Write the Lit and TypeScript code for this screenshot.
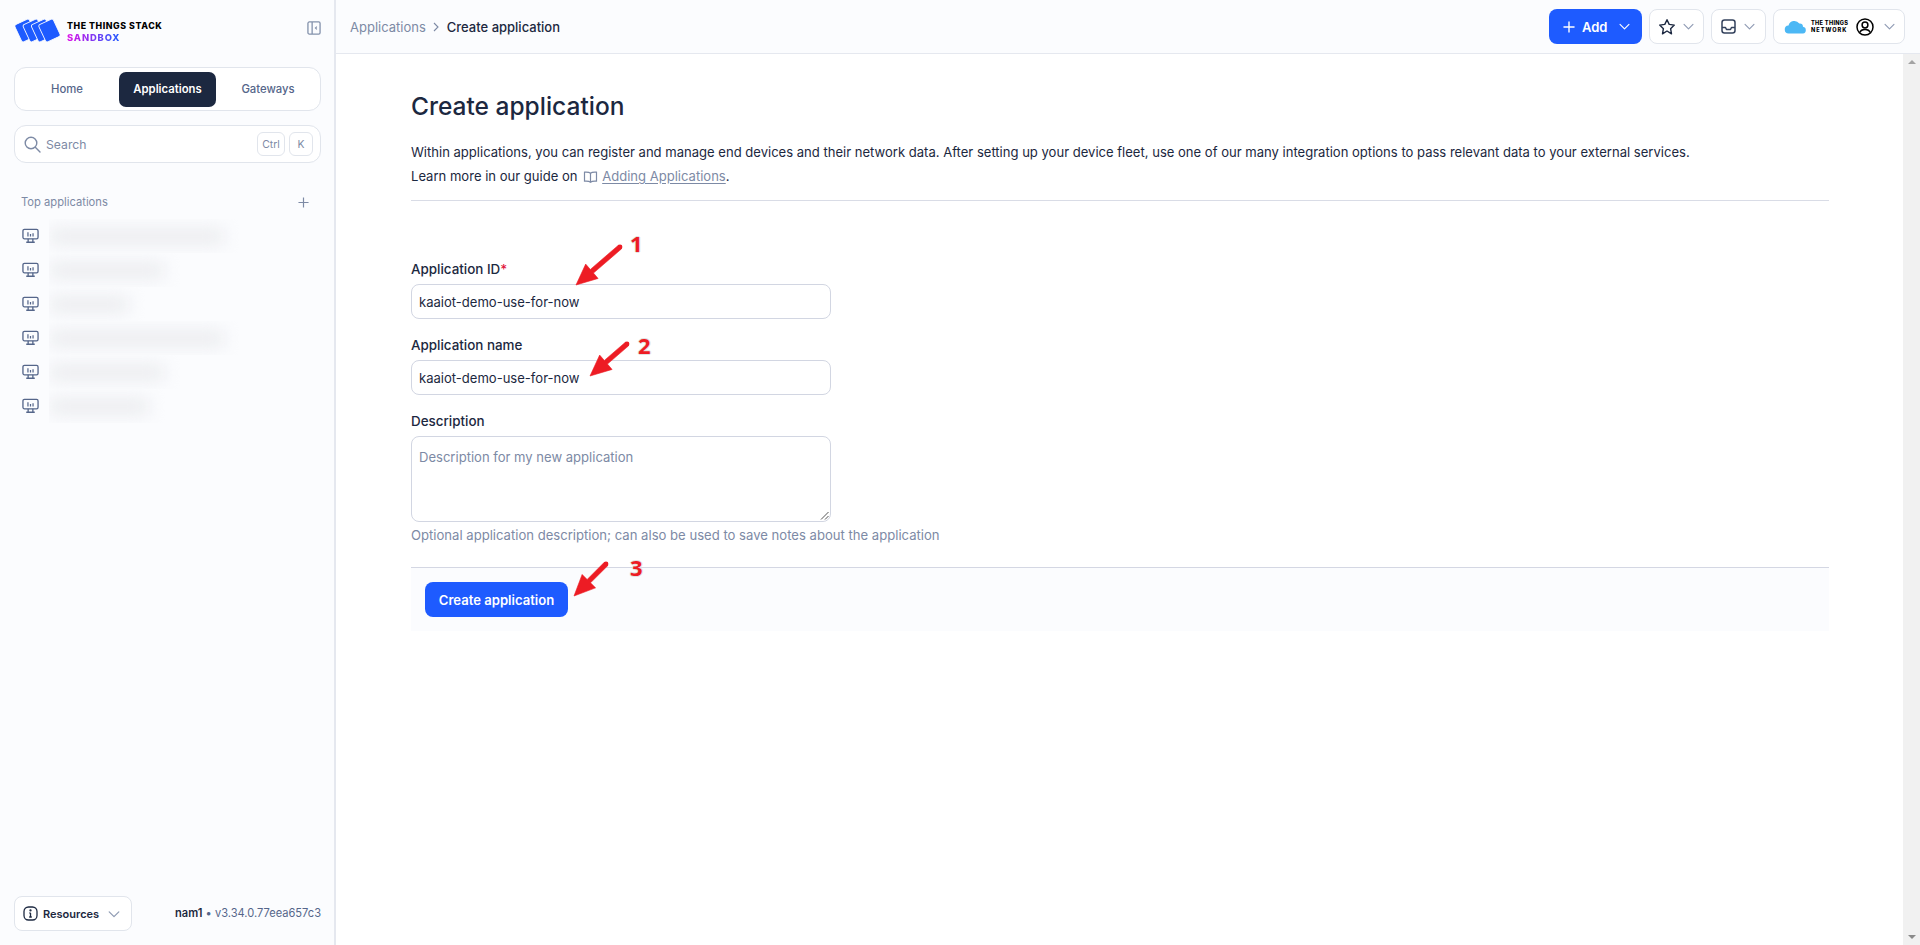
import { LitElement, html, css, svg } from "lit";
import { customElement } from "lit/decorators.js";

const chevron = html`<svg class="chev" viewBox="0 0 16 16" fill="none" stroke="currentColor" stroke-width="1.4" stroke-linecap="round" stroke-linejoin="round"><path d="M2.5 5.5 8 11l5.500-5.500"/></svg>`;

const monitor = html`<svg class="mon" viewBox="0 0 18 16" fill="none" stroke="#55668a" stroke-width="1.4"><rect x="1" y="1" width="16" height="10" rx="1.6"/><path d="M6.500 11v3.400M11.500 11v3.400M4.500 14.600h9"/><path d="M6.300 8.500V4M9 8.500V6M11.700 8.500V5" stroke-width="1.300"/></svg>`;

const arrow = (x1: number, y1: number, x2: number, y2: number) => {
  const a = Math.atan2(y2 - y1, x2 - x1);
  const L = 21, W = 9.5, T = 2.4;
  const bx = x2 - L * Math.cos(a), by = y2 - L * Math.sin(a);
  const nx = -Math.sin(a), ny = Math.cos(a);
  const p = `${x2},${y2} ${bx + nx * W},${by + ny * W} ${bx + nx * T},${by + ny * T} ${x1 + nx * T},${y1 + ny * T} ${x1 - nx * T},${y1 - ny * T} ${bx - nx * T},${by - ny * T} ${bx - nx * W},${by - ny * W}`;
  return svg`<polygon points=${p} fill="#ed1c24" stroke="#ed1c24" stroke-width="0.6" stroke-linejoin="round"/><circle cx=${x1} cy=${y1} r=${T} fill="#ed1c24"/>`;
};

@customElement("app-root")
export class AppRoot extends LitElement {
  static styles = css`
    :host { display: block; width: 1920px; height: 945px; overflow: hidden; font-family: Inter, "Noto Sans", sans-serif; color: #1c2840; background: #fff; position: relative; }
    * { box-sizing: border-box; }
    .shell { display: flex; height: 945px; }

    .side { width: 336px; flex: none; background: #fbfcfe; border-right: 2px solid #e5e8ef; display: flex; flex-direction: column; padding: 0 13px 0 14px; }
    .brand { height: 67px; display: flex; align-items: flex-start; padding-top: 18px; }
    .logo { width: 47px; height: 25px; flex: none; }
    .brandtext { margin-left: 6px; margin-top: 2px; font-weight: 800; font-size: 8.8px; letter-spacing: 0.56px; line-height: 12px; color: #000; white-space: nowrap; }
    .sandbox { display: block; font-size: 9.4px; background: linear-gradient(90deg, #e012e8, #1e5bff); -webkit-background-clip: text; background-clip: text; color: transparent; letter-spacing: 0.85px; width: max-content; }
    .collapse { width: 14px; height: 14px; margin-left: auto; margin-top: 3px; color: #8492ac; }

    .tabs { height: 44px; border: 1px solid #e1e5ec; border-radius: 12px; background: #fff; display: flex; align-items: center; padding: 0 4px; font-size: 11.3px; font-weight: 500; color: #55668a; }
    .tab { flex: 1; height: 35px; display: flex; align-items: center; justify-content: center; border-radius: 7px; }
    .tab.on { flex: none; width: 97px; margin: 0 4px 0 0; background: #1c2840; color: #fff; font-weight: 600; }
    .tab.first { flex: none; width: 100px; padding-right: 4px; }

    .search { margin-top: 14px; height: 38px; border: 1px solid #e1e5ec; border-radius: 12px; background: #fff; display: flex; align-items: center; padding: 0 7px 0 9px; font-size: 12.2px; color: #7d8aa5; }
    .search svg { width: 17px; height: 17px; margin-right: 5px; }
    .kbd { height: 24px; border: 1px solid #e1e5ec; border-radius: 6px; display: flex; align-items: center; justify-content: center; font-size: 10.4px; color: #7d8aa5; margin-left: 4px; width: 24px; }
    .kbd.first { margin-left: auto; width: 28px; }

    .tophead { margin-top: 31px; padding: 0 12px 0 7px; height: 16px; display: flex; justify-content: space-between; align-items: center; font-size: 11.2px; color: #7d8aa5; }
    .tophead svg { width: 11px; height: 11px; }
    .list { margin-top: 9px; }
    .row { height: 34px; display: flex; align-items: center; padding-left: 8px; }
    .mon { width: 17px; height: 16px; flex: none; }
    .blurcell { margin-left: 10px; height: 34px; width: 190px; overflow: hidden; display: flex; align-items: center; }
    .blurbar { height: 11px; background: #e4e5e9; filter: blur(9px); margin-left: 0; }

    .foot { margin-top: auto; height: 49px; display: flex; align-items: flex-start; justify-content: space-between; }
    .res { width: 118px; height: 35px; border: 1px solid #e1e5ec; border-radius: 8px; background: #fff; display: flex; align-items: center; padding: 0 10px 0 8px; font-size: 11px; font-weight: 600; color: #1c2840; }
    .res svg.i { width: 15px; height: 15px; margin-right: 5px; }
    .res .chev { width: 14px; height: 14px; margin-left: auto; color: #8f9bb3; }
    .ver { font-size: 11.1px; color: #55668a; margin-top: 10px; }
    .ver b { font-weight: 600; color: #1c2840; }

    .right { flex: 1; min-width: 0; display: flex; flex-direction: column; }
    .top { height: 54px; flex: none; background: #fbfcfe; border-bottom: 1px solid #e5e8ef; display: flex; align-items: flex-start; padding: 9px 15px 0 14px; }
    .crumb { height: 35px; display: flex; align-items: center; font-size: 13px; color: #7d8aa5; }
    .crumb svg { width: 10px; height: 10px; margin: 0 5.5px; color: #7d8aa5; }
    .crumb b { font-weight: 500; color: #1c2840; }
    .actions { margin-left: auto; display: flex; gap: 7px; }
    .add { width: 93px; height: 35px; background: #1e5bff; color: #fff; border-radius: 8px; display: flex; align-items: center; padding-left: 14px; font-size: 13px; font-weight: 600; }
    .add .plus { width: 12px; height: 12px; margin-right: 7px; }
    .add .chev { width: 13px; height: 13px; margin-left: 10px; }
    .ib { height: 35px; border: 1px solid #e1e5ec; border-radius: 8px; background: #fff; display: flex; align-items: center; }
    .ib .chev { width: 13px; height: 13px; color: #8f9bb3; }
    .star { width: 55px; padding-left: 8px; gap: 6px; }
    .star svg:first-child { width: 18px; height: 18px; }
    .inbox { width: 55px; padding-left: 9px; gap: 7px; }
    .inbox svg:first-child { width: 15px; height: 15px; }
    .prof { width: 132px; padding-left: 10px; }
    .cloud { width: 23px; height: 14px; flex: none; }
    .ttn { font-size: 5.6px; font-weight: 800; letter-spacing: 0.3px; line-height: 7px; color: #000; margin-left: 4px; white-space: nowrap; }
    .ttn span { display: block; letter-spacing: 1px; }
    .prof .user { width: 18px; height: 18px; margin-left: 8px; flex: none; }
    .prof .chev { margin-left: 9px; }

    .body { flex: 1; display: flex; min-height: 0; }
    .main { flex: 1; padding: 34px 74px 0 75px; }
    h1 { margin: 0; font-size: 24.5px; font-weight: 500; line-height: 36px; color: #1c2840; }
    .desc { margin-top: 16px; font-size: 13.05px; line-height: 24px; color: #1c2840; }
    .desc a { color: #7d8aa5; text-decoration: underline; text-underline-offset: 2px; }
    .desc svg { width: 15px; height: 14px; vertical-align: -3px; margin: 0 4px 0 2px; color: #7d8aa5; }
    .hr { height: 1px; background: #d9dce6; margin-top: 12px; }
    form { display: block; margin-top: 60px; width: 420px; }
    label { display: block; font-size: 13.4px; font-weight: 500; line-height: 16px; color: #1c2840; }
    label i { color: #e0123a; font-style: normal; }
    .input { margin-top: 7px; height: 35px; border: 1px solid #d2d6e2; border-radius: 8px; padding: 0 7px; display: flex; align-items: center; font-size: 13.05px; color: #1c2840; }
    label.next { margin-top: 18px; }
    .ta { margin-top: 7px; height: 86px; border: 1px solid #d2d6e2; border-radius: 8px; padding: 12px 7px; font-size: 13.05px; line-height: 16px; color: #7d8aa5; position: relative; }
    .ta svg { position: absolute; right: 1px; bottom: 1px; width: 9px; height: 9px; }
    .help { font-size: 13.1px; line-height: 16px; color: #7d8aa5; margin-top: 5px; white-space: nowrap; }
    .submit { margin-top: 24px; height: 64px; background: #fbfcfe; border-top: 1px solid #d4d7e3; padding: 14px 14px; }
    .btn { width: 143px; height: 35px; background: #1e5bff; border-radius: 8px; color: #fff; font-size: 13.1px; font-weight: 600; display: flex; align-items: center; justify-content: center; }

    .bar { width: 17px; flex: none; background: #f1f1f1; display: flex; flex-direction: column; justify-content: space-between; align-items: center; padding: 6px 0; }
    .bar i { width: 0; height: 0; border-left: 4px solid transparent; border-right: 4px solid transparent; display: block; }
    .bar .u { border-bottom: 4px solid #a3a3a3; }
    .bar .d { border-top: 4px solid #8a8a8a; }

    .notes { position: absolute; left: 0; top: 0; width: 1920px; height: 945px; pointer-events: none; }
    .n { position: absolute; font-family: "Open Sans", sans-serif; font-weight: 700; font-size: 22px; line-height: 24px; color: #ed1c24; text-shadow: 1px 0 0 #e2e2e2, -1px 0 0 #e2e2e2, 0 1px 0 #e2e2e2, 0 -1px 0 #e2e2e2; }
  `;

  render() {
    const widths = [175, 115, 80, 175, 115, 100];
    return html`
      <div class="shell">
        <aside class="side">
          <div class="brand">
            <svg class="logo" viewBox="0 0 47 25">
              ${[11.5, 19.8, 28.1, 35.5].map(
                (x) => svg`<rect x=${x - 8} y="3" width="16" height="19" rx="2" fill="#1e5bff" stroke="#fbfcfe" stroke-width="0.9" transform="rotate(-25 ${x} 12.5)"/>`
              )}
            </svg>
            <div class="brandtext">THE THINGS STACK<span class="sandbox">SANDBOX</span></div>
            <svg class="collapse" viewBox="0 0 15 15" fill="none" stroke="currentColor" stroke-width="1.4"><rect x="1" y="1" width="13" height="13" rx="1.5"/><path d="M5.5 1v13"/><path d="M10.6 6 9 7.5l1.6 1.5" stroke-width="1.2"/></svg>
          </div>
          <div class="tabs">
            <div class="tab first">Home</div>
            <div class="tab on">Applications</div>
            <div class="tab">Gateways</div>
          </div>
          <div class="search">
            <svg viewBox="0 0 17 17" fill="none" stroke="currentColor" stroke-width="1.4" stroke-linecap="round"><circle cx="7" cy="7" r="5.8"/><path d="M11.3 11.3 16 16"/></svg>
            <span>Search</span>
            <span class="kbd first">Ctrl</span><span class="kbd">K</span>
          </div>
          <div class="tophead">
            <span>Top applications</span>
            <svg viewBox="0 0 12 12" stroke="currentColor" stroke-width="1.3" fill="none"><path d="M6 .5v11M.5 6h11"/></svg>
          </div>
          <div class="list">
            ${widths.map(
              (w) => html`<div class="row">${monitor}<div class="blurcell"><div class="blurbar" style="width:${w}px"></div></div></div>`
            )}
          </div>
          <div class="foot">
            <div class="res">
              <svg class="i" viewBox="0 0 15 15" fill="none" stroke="#1c2840" stroke-width="1.3"><rect x="1" y="1" width="13" height="13" rx="4.5"/><path d="M7.5 7v4M6.4 7h1.100M6.200 11h2.600"/><circle cx="7.5" cy="4.4" r=".5"/></svg>
              <span>Resources</span>${chevron}
            </div>
            <div class="ver"><b>nam1</b> • v3.34.0.77eea657c3</div>
          </div>
        </aside>
        <div class="right">
          <header class="top">
            <div class="crumb">
              <span>Applications</span>
              <svg viewBox="0 0 10 10" fill="none" stroke="currentColor" stroke-width="1.1"><path d="M3 1l4 4-4 4"/></svg>
              <b>Create application</b>
            </div>
            <div class="actions">
              <div class="add">
                <svg class="plus" viewBox="0 0 13 13" stroke="currentColor" stroke-width="1.5" fill="none"><path d="M6.5 .5v12M.5 6.5h12"/></svg>
                <span>Add</span>${chevron}
              </div>
              <div class="ib star">
                <svg viewBox="0 0 18 18" fill="none" stroke="#1c2840" stroke-width="1.4" stroke-linejoin="round"><path d="M9 1.700l2.200 4.700 5.100.7-3.700 3.600.9 5.100L9 13l-4.500 2.800.9-5.100L1.700 7.100l5.100-.7z"/></svg>
                ${chevron}
              </div>
              <div class="ib inbox">
                <svg viewBox="0 0 15 15" fill="none" stroke="#33415c" stroke-width="1.5" stroke-linejoin="round"><rect x="1" y="1" width="13" height="13" rx="2.500"/><path d="M1 8.500h3.500l1 2h4l1-2H14"/></svg>
                ${chevron}
              </div>
              <div class="ib prof">
                <svg class="cloud" viewBox="0 0 23 14"><path fill="#4cb8f5" d="M5 13.500a4 4 0 0 1-.5-8A6 6 0 0 1 15.300 3.600 3.400 3.400 0 0 1 19 6.800a3.400 3.400 0 0 1 0 6.700z"/></svg>
                <div class="ttn">THE THINGS<span>NETWORK</span></div>
                <svg class="user" viewBox="0 0 18 18" fill="none" stroke="#000" stroke-width="1.5"><circle cx="9" cy="9" r="8"/><circle cx="9" cy="7" r="2.900"/><path d="M3.800 14.500c.8-2.200 2.800-3 5.200-3s4.400.8 5.200 3"/></svg>
                ${chevron}
              </div>
            </div>
          </header>
          <div class="body">
            <main class="main">
              <h1>Create application</h1>
              <div class="desc">
                Within applications, you can register and manage end devices and their network data. After setting up your device fleet, use one of our many integration options to pass relevant data to your external services.<br />
                Learn more in our guide on
                <svg viewBox="0 0 14 14" fill="none" stroke="currentColor" stroke-width="1.2"><path d="M7 3.200C6 2.300 4 2 1 2.200v9c3-.2 5 .1 6 1 1-.9 3-1.200 6-1v-9c-3-.2-5 .1-6 1zM7 3.200v9"/></svg><a>Adding Applications</a>.
              </div>
              <div class="hr"></div>
              <form>
                <label>Application ID<i>*</i></label>
                <div class="input">kaaiot-demo-use-for-now</div>
                <label class="next">Application name</label>
                <div class="input">kaaiot-demo-use-for-now</div>
                <label class="next">Description</label>
                <div class="ta">
                  Description for my new application
                  <svg viewBox="0 0 9 9" stroke="#555" stroke-width="1" fill="none"><path d="M1 8.500 8.500 1M5 8.500 8.500 5"/></svg>
                </div>
                <div class="help">Optional application description; can also be used to save notes about the application</div>
              </form>
              <div class="submit"><div class="btn">Create application</div></div>
            </main>
            <div class="bar"><i class="u"></i><i class="d"></i></div>
          </div>
        </div>
      </div>
      <svg class="notes" viewBox="0 0 1920 945">
        ${arrow(620, 247, 576, 285)}
        ${arrow(627, 344, 590, 376)}
        ${arrow(606, 564, 574, 596)}
      </svg>
      <span class="n" style="left:630px;top:231px">1</span>
      <span class="n" style="left:638px;top:333px">2</span>
      <span class="n" style="left:630px;top:555px">3</span>
    `;
  }
}
